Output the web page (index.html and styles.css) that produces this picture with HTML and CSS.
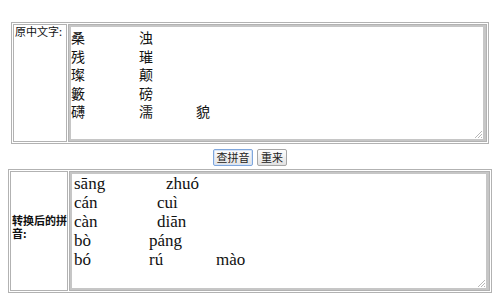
FILE: index.html
```
<!DOCTYPE html>
<html lang="zh-CN">
<head>
    <meta charset="UTF-8">
    <title>汉字转拼音</title>
    <link rel="stylesheet" href="styles.css">
</head>
<body>
    <div class="page">
        <div class="grid grid-top">
            <div class="cell label label-top">原中文字:</div>
            <div class="cell field">
                <div class="box box-hanzi">
                    <div class="line"><span class="w68">桑</span><span>浊</span></div>
                    <div class="line"><span class="w68">残</span><span>璀</span></div>
                    <div class="line"><span class="w68">璨</span><span>颠</span></div>
                    <div class="line"><span class="w68">籔</span><span>磅</span></div>
                    <div class="line"><span class="w68">礴</span><span class="w57">濡</span><span>貌</span></div>
                    <svg class="grip" width="9" height="9" viewBox="0 0 9 9">
                        <path d="M8 1 L1 8 M8 4 L4 8 M8 7 L7 8" stroke="#b8b8b8" stroke-width="1"/>
                    </svg>
                </div>
            </div>
        </div>

        <div class="actions">
            <button class="btn btn-query">查拼音</button>
            <button class="btn btn-reset">重来</button>
        </div>

        <div class="grid grid-bottom">
            <div class="cell label label-mid">转换后的拼音:</div>
            <div class="cell field">
                <div class="box box-pinyin">
                    <div class="line"><span class="w92">sāng</span><span>zhuó</span></div>
                    <div class="line"><span class="w83">cán</span><span>cuì</span></div>
                    <div class="line"><span class="w83">càn</span><span>diān</span></div>
                    <div class="line"><span class="w75">bò</span><span>páng</span></div>
                    <div class="line"><span class="w75">bó</span><span class="w67">rú</span><span>mào</span></div>
                    <svg class="grip" width="9" height="9" viewBox="0 0 9 9">
                        <path d="M8 1 L1 8 M8 4 L4 8 M8 7 L7 8" stroke="#b8b8b8" stroke-width="1"/>
                    </svg>
                </div>
            </div>
        </div>
    </div>
</body>
</html>
```

FILE: styles.css
```
:root {
    --line-color: #b2b2b2;
    --box-color: #c6c6c6;
    --text-color: #111111;
}

body {
    margin: 0;
    padding: 0;
    background-color: #ffffff;
    color: var(--text-color);
    font-family: "Noto Sans CJK SC", sans-serif;
}

.page {
    padding-top: 22px;
}

.grid {
    display: flex;
    gap: 1px;
    margin: 0 auto;
    padding: 1px;
    border: 1px solid var(--line-color);
    box-sizing: border-box;
}

.grid-top {
    width: 478px;
    height: 122px;
}

.grid-bottom {
    width: 484px;
    height: 124px;
}

.cell {
    border: 1px solid var(--line-color);
    box-sizing: border-box;
}

.label {
    font-size: 11px;
    line-height: 13px;
    padding-left: 1px;
}

.label-top {
    width: 54px;
}

.label-mid {
    width: 58px;
    display: flex;
    align-items: center;
    padding-bottom: 9px;
    font-weight: bold;
}

.field {
    flex: 1;
    display: flex;
}

.box {
    flex: 1;
    position: relative;
    border: 2px solid var(--box-color);
    border-right-width: 3px;
    box-sizing: border-box;
}

.box-hanzi {
    padding-top: 1px;
    font-size: 14px;
    line-height: 18.5px;
}

.box-pinyin {
    padding-left: 2px;
    font-family: "Liberation Serif", serif;
    font-size: 17px;
    line-height: 19px;
}

.line {
    white-space: nowrap;
}

.line span {
    display: inline-block;
}

.w57 { width: 57px; }
.w67 { width: 67px; }
.w68 { width: 68px; }
.w75 { width: 75px; }
.w83 { width: 83px; }
.w92 { width: 92px; }

.grip {
    position: absolute;
    right: 0;
    bottom: 0;
}

.actions {
    display: flex;
    justify-content: center;
    gap: 4px;
    height: 17px;
    margin: 5px 0 3px;
}

.btn {
    height: 17px;
    padding: 0;
    border: 1px solid #a6a6a6;
    border-radius: 2px;
    background: linear-gradient(#fdfdfd, #e2e2e2);
    color: #222222;
    font-family: "Noto Sans CJK SC", sans-serif;
    font-size: 11px;
    line-height: 15px;
    cursor: pointer;
}

.btn-query {
    width: 40px;
    border-color: #7fa6dc;
    box-shadow: inset 0 0 0 1px #d6e4f7;
}

.btn-reset {
    width: 30px;
}
```
